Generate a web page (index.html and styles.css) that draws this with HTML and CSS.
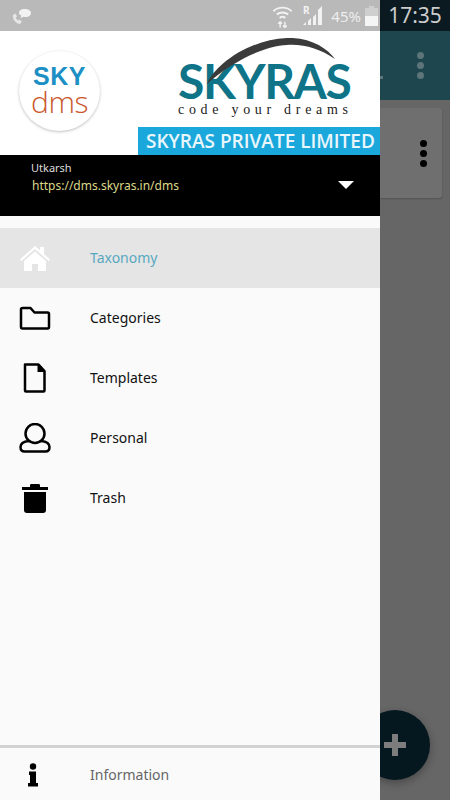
FILE: index.html
```html
<!DOCTYPE html>
<html lang="en">
<head>
    <meta charset="UTF-8">
    <meta name="viewport" content="width=device-width, initial-scale=1.0">
    <title>Sky DMS</title>
    <link rel="stylesheet" href="styles.css">
</head>
<body>
    <div class="screen">
        <div class="drawer">
            <div class="status-left">
                <svg class="status-call" width="22" height="22" viewBox="0 0 22 22">
                    <path d="M3 10c-.8 4 2.500 8.500 7 9l2-2.500-2.800-2-1.200 1c-1.200-.8-1.800-1.800-2.200-3l1.200-1-1.500-3z" fill="#e6e6e6"/>
                    <path d="M14.500 4c3.500 0 6.500 1.500 6.500 4s-2.500 4-5.500 4c-.8 0-1.500 0-2.200-.3l-2.800 1.500.8-2.700C9.500 9.500 9 8.700 9 8c0-2.500 2.500-4 5.500-4z" fill="#f2f2f2"/>
                </svg>
                <div class="status-icons">
                    <svg width="21" height="26" viewBox="0 0 22 26" fill="none" stroke="#f2f2f2" stroke-width="2">
                        <path d="M1.500 8c5-5 14-5 19 0"/>
                        <path d="M5 11.500c3.500-3 8.500-3 12 0"/>
                        <path d="M8 15c2-1.500 4-1.500 6 0"/>
                        <path d="M8.500 19v6M6.500 21l2-2 2 2M13.500 25v-6M11.500 23l2 2 2-2" stroke-width="1.500"/>
                    </svg>
                    <svg class="status-signal" width="20" height="24" viewBox="0 -4 20 24">
                        <path d="M0 19h3v-3l-3 3zM5 19h3v-7l-3 3zM10 19h3V8l-3 3zM15 19h4V0l-4 4z" fill="#f2f2f2"/>
                        <text x="0" y="8" class="status-r">R</text>
                    </svg>
                    <span class="status-pct">45%</span>
                    <svg width="13" height="20" viewBox="0 0 13 20">
                        <path d="M4 0h5v2h4v18H0V2h4z" fill="#cfcfcf"/>
                        <path d="M0 10h13v10H0z" fill="#f5f5f5"/>
                    </svg>
                </div>
            </div>

            <div class="brand">
                <div class="brand-badge">
                    <span class="badge-sky">SKY</span>
                    <span class="badge-dms">dms</span>
                </div>
                <div class="brand-logo">
                    <div class="logo-name">SKYRAS</div>
                    <div class="logo-tag">code your dreams</div>
                    <svg class="logo-arc" width="130" height="47" viewBox="0 0 130 47">
                        <path d="M2 46C8 30 40 2 82 0c23-1 40 10 48 21C115 11 100 6 82 7 58 8 25 25 2 46z" fill="#3b3b3b"/>
                    </svg>
                </div>
                <div class="brand-strip">SKYRAS PRIVATE LIMITED</div>
            </div>

            <div class="account">
                <div>
                    <div class="account-name">Utkarsh</div>
                    <div class="account-url">https://dms.skyras.in/dms</div>
                </div>
                <span class="account-arrow"></span>
            </div>

            <ul class="menu">
                <li class="menu-item active">
                    <svg class="menu-icon" width="32" height="28" viewBox="0 0 32 28">
                        <path d="M16 2L1 15.500l1.500 1.500L16 5l13.500 12 1.500-1.500-6-5.500V3h-4v3.500z" fill="#fff"/>
                        <path d="M16 7.500L5 17v10h8v-7h6v7h8V17z" fill="#fff"/>
                    </svg>
                    <span>Taxonomy</span>
                </li>
                <li class="menu-item">
                    <svg class="menu-icon" width="32" height="24" viewBox="0 0 32 24" fill="none" stroke="#000" stroke-width="2.500" stroke-linejoin="round">
                        <path d="M2 3.500c0-1 .5-1.500 1.500-1.500h8l4 4.500h13c1 0 1.500.5 1.500 1.500v13c0 1-.5 1.500-1.500 1.500h-25C2.500 22.500 2 22 2 21z"/>
                    </svg>
                    <span>Categories</span>
                </li>
                <li class="menu-item">
                    <svg class="menu-icon" width="32" height="30" viewBox="0 0 32 30" fill="none" stroke="#000" stroke-width="2.500" stroke-linejoin="round">
                        <path d="M6 1.500h13.500l6 6.500v19.500c0 .7-.4 1-1 1H7c-.7 0-1-.3-1-1z"/>
                        <path d="M18.500 1.500h1.500l5.500 6V9h-7z" fill="#000" stroke="none"/>
                    </svg>
                    <span>Templates</span>
                </li>
                <li class="menu-item">
                    <svg class="menu-icon" width="32" height="30" viewBox="0 0 32 30" fill="none" stroke="#000" stroke-width="2.500">
                        <circle cx="16" cy="10.500" r="9.500"/>
                        <path d="M10 18c-5 .5-8.500 2.500-8.500 6 0 3 1.500 4.500 4 4.500h21c2.500 0 4-1.500 4-4.500 0-3.500-3.500-5.500-8.500-6"/>
                    </svg>
                    <span>Personal</span>
                </li>
                <li class="menu-item">
                    <svg class="menu-icon" width="32" height="30" viewBox="0 0 32 30">
                        <path d="M3 4h8V2.500C11 1.500 11.500 1 12.500 1h7c1 0 1.500.5 1.500 1.500V4h8v3H3z" fill="#000"/>
                        <path d="M5 9h22v18c0 2-1 3-3 3H8c-2 0-3-1-3-3z" fill="#000"/>
                    </svg>
                    <span>Trash</span>
                </li>
            </ul>

            <div class="menu-footer">
                <svg class="menu-icon" width="32" height="24" viewBox="0 0 32 24">
                    <circle cx="14" cy="3.500" r="3.200" fill="#000"/>
                    <path d="M10 8.500h7V20h2v3.500H9V20h2v-8h-1z" fill="#000"/>
                </svg>
                <span>Information</span>
            </div>
        </div>

        <div class="behind">
            <div class="behind-status">17:35</div>
            <div class="behind-bar">
                <span class="bar-speck"></span>
                <div class="dots dots-faded"><i></i><i></i><i></i></div>
            </div>
            <div class="behind-body">
                <div class="behind-card">
                    <div class="dots"><i></i><i></i><i></i></div>
                </div>
            </div>
        </div>

        <div class="fab"><span class="fab-plus"></span></div>
    </div>
</body>
</html>
```

FILE: styles.css
```css
html, body {
    margin: 0;
    padding: 0;
}

body {
    font-family: 'Noto Sans', sans-serif;
    background: #666;
}

.screen {
    position: relative;
    display: flex;
    width: 450px;
    height: 800px;
    overflow: hidden;
}

/* drawer */
.drawer {
    position: relative;
    z-index: 2;
    display: flex;
    flex-direction: column;
    width: 380px;
    height: 800px;
    background: #fafafa;
}

.status-left {
    display: flex;
    align-items: center;
    justify-content: space-between;
    height: 31px;
    padding: 0 2px 0 10px;
    box-sizing: border-box;
    background: #b9b9b9;
}

.status-icons {
    display: flex;
    align-items: center;
    gap: 4px;
}

.status-signal {
    margin-left: 6px;
    margin-top: -4px;
}

.status-r {
    font-family: 'Noto Sans', sans-serif;
    font-size: 10px;
    font-weight: bold;
    fill: #f2f2f2;
}

.status-pct {
    margin-left: 4px;
    font-size: 15px;
    color: #ededed;
}

.brand {
    position: relative;
    height: 124px;
    background: #fff;
}

.brand-badge {
    position: absolute;
    left: 19px;
    top: 20px;
    width: 81px;
    height: 80px;
    display: flex;
    flex-direction: column;
    align-items: center;
    justify-content: center;
    border-radius: 50%;
    background: #fff;
    box-shadow: 0 1px 3px rgba(0, 0, 0, 0.25);
}

.badge-sky {
    font-family: 'Liberation Sans', sans-serif;
    font-size: 25px;
    font-weight: bold;
    line-height: 21px;
    letter-spacing: 0.5px;
    color: #1c8fc4;
}

.badge-dms {
    font-family: 'Open Sans', sans-serif;
    font-size: 30px;
    font-weight: 300;
    line-height: 29px;
    letter-spacing: -0.5px;
    color: #c9572b;
}

.brand-logo {
    position: absolute;
    left: 178px;
    top: 7px;
    width: 174px;
}

.logo-arc {
    position: absolute;
    left: 27px;
    top: 0;
}

.logo-name {
    margin-top: 24px;
    font-family: 'Lato', sans-serif;
    font-size: 48px;
    line-height: 38px;
    font-weight: 700;
    letter-spacing: -1.4px;
    white-space: nowrap;
    color: #0f7488;
}

.logo-tag {
    margin-top: 3px;
    font-family: 'Liberation Serif', serif;
    font-size: 14px;
    line-height: 14px;
    letter-spacing: 4.7px;
    white-space: nowrap;
    color: #222;
}

.brand-strip {
    position: absolute;
    left: 138px;
    right: 0;
    bottom: 0;
    height: 28px;
    padding-left: 8px;
    box-sizing: border-box;
    font-family: 'Open Sans', sans-serif;
    font-size: 19px;
    font-weight: 600;
    line-height: 28px;
    white-space: nowrap;
    color: #e9f6fb;
    background: #1aa8dc;
}

.account {
    display: flex;
    justify-content: space-between;
    height: 61px;
    padding: 6px 26px 0 31px;
    box-sizing: border-box;
    background: #000;
}

.account-name {
    font-size: 11px;
    line-height: 14px;
    color: #ddd;
}

.account-url {
    margin-top: 3px;
    margin-left: 1px;
    font-size: 12px;
    line-height: 16px;
    color: #dcd88a;
}

.account-arrow {
    width: 0;
    height: 0;
    margin-top: 20px;
    border-left: 8px solid transparent;
    border-right: 8px solid transparent;
    border-top: 8px solid #fff;
}

.menu {
    flex: 1;
    margin: 12px 0 0;
    padding: 0;
    list-style: none;
}

.menu-item,
.menu-footer {
    display: flex;
    align-items: center;
    height: 60px;
    padding-bottom: 2px;
    box-sizing: border-box;
    font-size: 14px;
    color: #111;
}

.menu-item .menu-icon,
.menu-footer .menu-icon {
    flex: none;
    margin: 2px 39px 0 19px;
}

.menu-item.active {
    background: #e5e5e5;
    color: #58a9c0;
}

.menu-footer {
    height: 55px;
    padding-bottom: 0;
    border-top: 3px solid #d2d2d2;
    color: #666;
}

/* what shows behind the drawer */
.behind {
    flex: 1;
    display: flex;
    flex-direction: column;
}

.behind-status {
    height: 31px;
    font-size: 21px;
    line-height: 31px;
    text-align: center;
    color: #ccc;
    background: #0b1a20;
}

.behind-bar {
    display: flex;
    justify-content: space-between;
    align-items: center;
    height: 69px;
    padding-right: 26px;
    background: #1d464e;
}

.bar-speck {
    width: 3px;
    height: 3px;
    margin-top: 23px;
    background: #5d7479;
}

.behind-body {
    flex: 1;
    background: #666;
}

.behind-card {
    display: flex;
    align-items: center;
    justify-content: flex-end;
    width: 62px;
    height: 90px;
    margin-top: 8px;
    padding-right: 15px;
    box-sizing: border-box;
    border-radius: 0 3px 3px 0;
    background: #6f6f6f;
    box-shadow: 0 1px 2px rgba(0, 0, 0, 0.2);
}

.dots {
    display: flex;
    flex-direction: column;
    gap: 3px;
}

.dots i {
    display: block;
    width: 7px;
    height: 7px;
    border-radius: 50%;
    background: #000;
}

.dots-faded i {
    background: #5d7479;
}

.fab {
    position: absolute;
    z-index: 1;
    left: 360px;
    top: 710px;
    width: 70px;
    height: 70px;
    border-radius: 50%;
    background: #05171f;
    box-shadow: 0 3px 8px rgba(0, 0, 0, 0.3);
}

.fab-plus {
    position: absolute;
    left: 24px;
    top: 24px;
    width: 22px;
    height: 22px;
    background:
        linear-gradient(#7d7d7d, #7d7d7d) center / 22px 6px no-repeat,
        linear-gradient(#7d7d7d, #7d7d7d) center / 6px 22px no-repeat;
}
```
